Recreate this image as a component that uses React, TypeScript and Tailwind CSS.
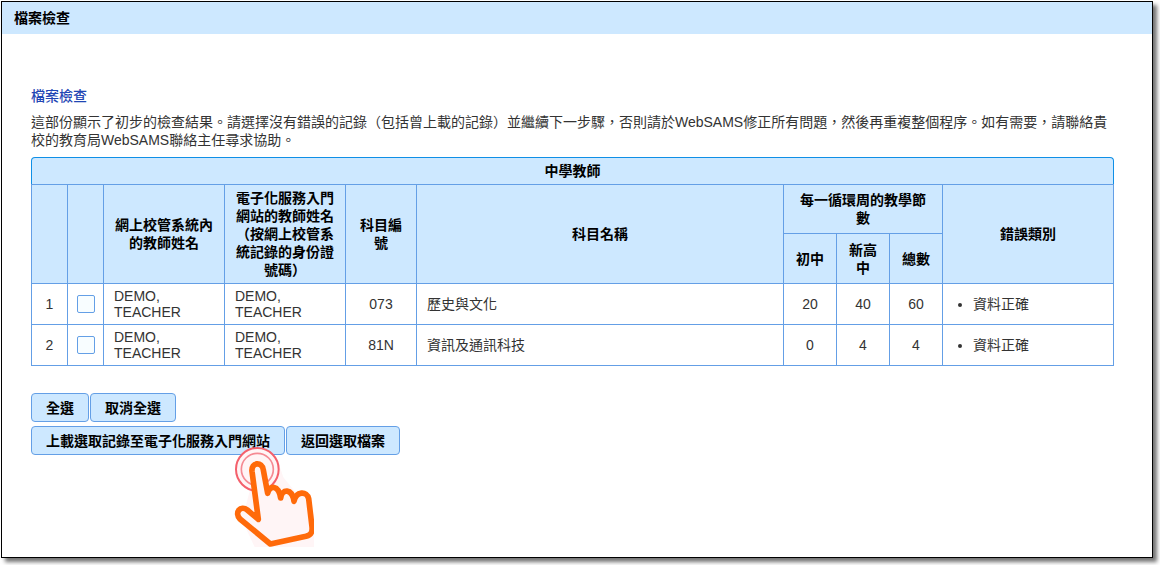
import React from "react";

const records = [
  { id: 1, name: "DEMO, TEACHER", code: "073", subject: "歷史與文化", junior: 20, senior: 40, total: 60, error: "資料正確" },
  { id: 2, name: "DEMO, TEACHER", code: "81N", subject: "資訊及通訊科技", junior: 0, senior: 4, total: 4, error: "資料正確" },
];

const th = "border border-[#649fe6] bg-[#cde8ff] px-2.5 py-1 text-center align-middle font-bold text-black";
const td = "border border-[#649fe6] h-[41px] px-2.5 py-1 align-middle leading-4";

function Button({ children }: { children: React.ReactNode }) {
  return (
    <button
      type="button"
      className="flex h-[29px] items-center rounded border border-[#649fe6] bg-[#cde8ff] px-3.5 font-bold text-black"
    >
      {children}
    </button>
  );
}

function PointingHand() {
  return (
    <svg
      aria-hidden="true"
      viewBox="42 18 240 303"
      className="pointer-events-none absolute top-[20px] left-[203px] h-[101px] w-20"
      fill="none"
      strokeLinecap="round"
      strokeLinejoin="round"
    >
      <path d="M172 58 L190 112 L282 225 V321 H104 L66 240 L90 150 Z" fill="#fff5f6" />
      <circle cx="112" cy="88" r="64" fill="#fff5f6" stroke="#f4606c" strokeWidth="6" />
      <circle cx="112" cy="88" r="48" stroke="#f58a93" strokeWidth="5" />
      <path
        d="M115 238 L96 94 C93 66 127 64 130 90 L143 160 C148 134 176 134 182 174 C186 146 216 144 222 184 C228 153 261 152 266 176 L276 260 C278 278 272 285 258 289 L151 312 L60 237 C42 218 62 194 82 210 Z"
        fill="#fff5f6"
        stroke="#ff6a0a"
        strokeWidth="17"
      />
    </svg>
  );
}

export default function App() {
  return (
    <div className="flex min-h-screen bg-white pt-px pr-[7px] pb-[7px] pl-px font-['Liberation_Sans','Noto_Sans_CJK_TC',sans-serif] text-sm leading-[18px] text-[#333]">
      <div className="flex-1 border border-black bg-white shadow-[4px_4px_4px_rgba(0,0,0,0.55)]">
        <header className="flex h-8 items-center bg-[#cde8ff] px-3">
          <h1 className="font-bold text-black">檔案檢查</h1>
        </header>
        <main className="pt-[53px] pr-[38px] pb-8 pl-[29px]">
          <h2 className="font-medium text-[#1f46b4]">檔案檢查</h2>
          <p className="mt-2">
            這部份顯示了初步的檢查結果。請選擇沒有錯誤的記錄（包括曾上載的記錄）並繼續下一步驟，否則請於WebSAMS修正所有問題，然後再重複整個程序。如有需要，請聯絡貴校的教育局WebSAMS聯絡主任尋求協助。
          </p>
          <table className="mt-2 w-full table-fixed border-collapse">
            <caption className="h-[27px] rounded-t border border-b-0 border-[#0f8fe6] bg-[#cde8ff] leading-[26px] font-bold text-black">
              中學教師
            </caption>
            <colgroup>
              <col className="w-9" />
              <col className="w-9" />
              <col className="w-[121px]" />
              <col className="w-[121px]" />
              <col className="w-[71px]" />
              <col />
              <col className="w-[53px]" />
              <col className="w-[53px]" />
              <col className="w-[53px]" />
              <col className="w-[171px]" />
            </colgroup>
            <thead>
              <tr className="h-[49px]">
                <th rowSpan={2} className={th}></th>
                <th rowSpan={2} className={th}></th>
                <th rowSpan={2} className={th}>網上校管系統內的教師姓名</th>
                <th rowSpan={2} className={th}>電子化服務入門網站的教師姓名（按網上校管系統記錄的身份證號碼）</th>
                <th rowSpan={2} className={th}>科目編號</th>
                <th rowSpan={2} className={th}>科目名稱</th>
                <th colSpan={3} className={th}>每一循環周的教學節數</th>
                <th rowSpan={2} className={th}>錯誤類別</th>
              </tr>
              <tr className="h-[50px]">
                <th className={th}>初中</th>
                <th className={th}>新高中</th>
                <th className={th}>總數</th>
              </tr>
            </thead>
            <tbody>
              {records.map((r) => (
                <tr key={r.id}>
                  <td className={`${td} text-center`}>{r.id}</td>
                  <td className="border border-[#649fe6] p-0">
                    <input
                      type="checkbox"
                      aria-label={`選取記錄 ${r.id}`}
                      className="mx-auto block size-[18px] appearance-none rounded-xs border border-[#649fe6] bg-[#f8fdff] checked:bg-[#649fe6]"
                    />
                  </td>
                  <td className={td}>{r.name}</td>
                  <td className={td}>{r.name}</td>
                  <td className={`${td} text-center`}>{r.code}</td>
                  <td className={td}>{r.subject}</td>
                  <td className={`${td} text-center`}>{r.junior}</td>
                  <td className={`${td} text-center`}>{r.senior}</td>
                  <td className={`${td} text-center`}>{r.total}</td>
                  <td className={td}>
                    <ul className="list-disc pl-5">
                      <li>{r.error}</li>
                    </ul>
                  </td>
                </tr>
              ))}
            </tbody>
          </table>
          <div className="mt-[27px] flex gap-px">
            <Button>全選</Button>
            <Button>取消全選</Button>
          </div>
          <div className="relative mt-1 flex gap-px">
            <Button>上載選取記錄至電子化服務入門網站</Button>
            <Button>返回選取檔案</Button>
            <PointingHand />
          </div>
        </main>
      </div>
    </div>
  );
}
